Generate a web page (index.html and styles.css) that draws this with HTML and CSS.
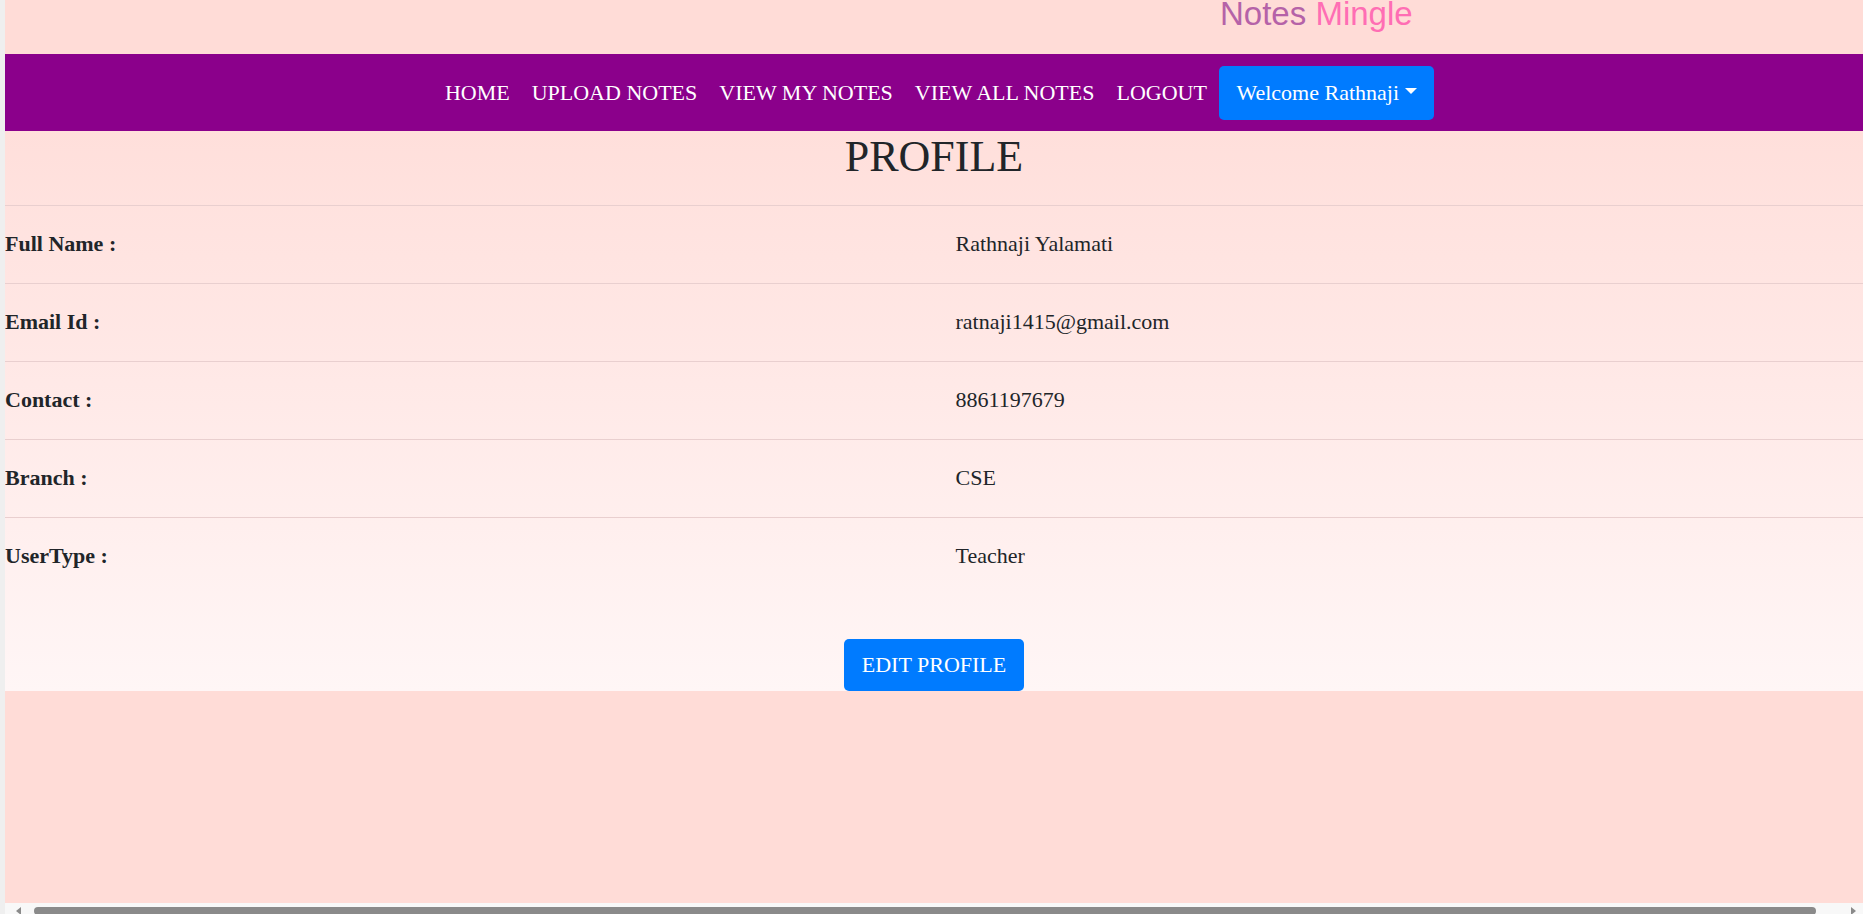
FILE: index.html
```html
<!DOCTYPE html>
<html lang="en">
<head>
<meta charset="utf-8">
<title>Profile - Notes Mingle</title>
<link rel="stylesheet" href="styles.css">
</head>
<body>
<div class="page">
  <header class="brand">
    <span class="brand-notes">Notes</span> <span class="brand-mingle">Mingle</span>
  </header>
  <nav class="navbar">
    <ul class="nav-list">
      <li><a class="nav-link" href="#">HOME</a></li>
      <li><a class="nav-link" href="#">UPLOAD NOTES</a></li>
      <li><a class="nav-link" href="#">VIEW MY NOTES</a></li>
      <li><a class="nav-link" href="#">VIEW ALL NOTES</a></li>
      <li><a class="nav-link" href="#">LOGOUT</a></li>
      <li><button class="btn btn-welcome" type="button">Welcome Rathnaji<span class="caret"></span></button></li>
    </ul>
  </nav>
  <main class="profile">
    <h2 class="profile-title">PROFILE</h2>
    <div class="profile-table">
      <div class="row"><div class="label">Full Name :</div><div class="value">Rathnaji Yalamati</div></div>
      <div class="row"><div class="label">Email Id :</div><div class="value">ratnaji1415@gmail.com</div></div>
      <div class="row"><div class="label">Contact :</div><div class="value">8861197679</div></div>
      <div class="row"><div class="label">Branch :</div><div class="value">CSE</div></div>
      <div class="row row-last"><div class="label">UserType :</div><div class="value">Teacher</div></div>
    </div>
    <div class="actions">
      <button class="btn btn-edit" type="button">EDIT PROFILE</button>
    </div>
  </main>
</div>
<div class="hscroll">
  <span class="arrow arrow-left"></span>
  <span class="thumb"></span>
  <span class="arrow arrow-right"></span>
</div>
</body>
</html>
```

FILE: styles.css
```css
html, body {
  margin: 0;
  padding: 0;
  height: 100%;
}

body {
  background: #ffdcd7;
  font-family: "Liberation Serif", "Times New Roman", serif;
  color: #212529;
  overflow: hidden;
  border-left: 5px solid #efefef;
  box-sizing: border-box;
}

.page {
  display: flex;
  flex-direction: column;
}

.brand {
  height: 54px;
  padding-left: 1215px;
  font-family: "Liberation Sans", Arial, sans-serif;
  font-size: 33px;
  line-height: 27px;
  white-space: nowrap;
}

.brand-notes {
  color: #b562a8;
}

.brand-mingle {
  color: #ff6eb4;
}

.navbar {
  height: 77px;
  background: #8b008b;
  display: flex;
  align-items: center;
  justify-content: center;
}

.nav-list {
  list-style: none;
  margin: 0;
  padding: 0;
  display: flex;
  align-items: center;
}

.nav-link {
  display: block;
  padding: 0 11px;
  color: #ffffff;
  text-decoration: none;
  font-size: 22px;
  line-height: 32px;
}

.btn {
  font-family: "Liberation Serif", "Times New Roman", serif;
  font-size: 22px;
  color: #ffffff;
  background: #007bff;
  border: none;
  border-radius: 5px;
  cursor: pointer;
}

.btn-welcome {
  height: 54px;
  margin-left: 1px;
  padding: 0 17.5px;
  display: flex;
  align-items: center;
}

.caret {
  display: inline-block;
  margin-left: 5.6px;
  margin-bottom: 3px;
  border-top: 6px solid #ffffff;
  border-left: 6.3px solid transparent;
  border-right: 6.3px solid transparent;
}

.profile {
  background: linear-gradient(to bottom, #ffdfdb 0%, #ffe9e7 45%, #fff6f6 100%);
  height: 560px;
  display: flex;
  flex-direction: column;
}

.profile-title {
  margin: 0 0 21px;
  font-size: 44px;
  line-height: 52.8px;
  font-weight: normal;
  text-align: center;
}

.profile-table {
  display: flex;
  flex-direction: column;
}

.row {
  display: grid;
  grid-template-columns: 1fr 1fr;
  align-items: center;
  height: 77px;
  border-top: 1px solid #e9cfcf;
  font-size: 22px;
}

.label {
  font-weight: bold;
}

.value {
  padding-left: 21.5px;
}

.actions {
  padding-top: 44px;
  display: flex;
  justify-content: center;
}

.btn-edit {
  height: 52px;
  padding: 0 17.5px;
}

.hscroll {
  position: fixed;
  left: 5px;
  right: 0;
  bottom: 0;
  height: 11px;
  background: #f8f8f8;
}

.thumb {
  position: absolute;
  left: 29px;
  right: 47px;
  top: 4px;
  height: 8px;
  border-radius: 4px;
  background: #8a8a8a;
}

.arrow {
  position: absolute;
  top: 4px;
  width: 0;
  height: 0;
  border-top: 4px solid transparent;
  border-bottom: 4px solid transparent;
}

.arrow-left {
  left: 11px;
  border-right: 5px solid #8a8a8a;
}

.arrow-right {
  right: 7px;
  border-left: 5px solid #8a8a8a;
}
```
